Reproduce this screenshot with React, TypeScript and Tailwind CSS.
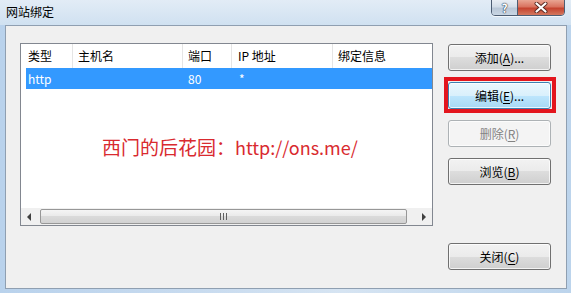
import type { ReactNode } from "react";

const ui = "font-['Noto_Sans_CJK_SC',sans-serif]";

type BtnProps = {
  children: ReactNode;
  variant?: "normal" | "hot" | "disabled";
};

function WinButton({ children, variant = "normal" }: BtnProps) {
  const look =
    variant === "hot"
      ? "border-[#3c7fb1] bg-[linear-gradient(#eaf6fd_0%,#d9f0fc_50%,#bee6fd_50%,#a7d9f5_100%)] text-black"
      : variant === "disabled"
        ? "border-[#adb2b5] bg-[#f4f4f4] text-[#838383]"
        : "border-[#707070] bg-[linear-gradient(#f2f2f2_0%,#ebebeb_50%,#dddddd_50%,#cfcfcf_100%)] text-black";
  return (
    <button
      type="button"
      className={`flex h-[27px] w-[103px] items-center justify-center rounded-[3px] border text-[12px] leading-none shadow-[inset_0_0_0_1px_rgba(255,255,255,0.75)] ${look}`}
    >
      {children}
    </button>
  );
}

function Key({ k }: { k: string }) {
  return <span className="underline underline-offset-2">{k}</span>;
}

function ArrowLeft() {
  return (
    <svg width="5" height="8" viewBox="0 0 5 8" aria-hidden>
      <polygon points="4,0 0,4 4,8" fill="#404040" />
    </svg>
  );
}

function ArrowRight() {
  return (
    <svg width="5" height="8" viewBox="0 0 5 8" aria-hidden>
      <polygon points="1,0 5,4 1,8" fill="#404040" />
    </svg>
  );
}

function CloseGlyph() {
  return (
    <svg width="14" height="11" viewBox="0 0 14 11" aria-hidden>
      <path d="M2.5 1.5 L11.5 9.5 M11.5 1.5 L2.5 9.5" stroke="#5a2a22" strokeWidth="4" strokeLinecap="round" />
      <path d="M2.5 1.5 L11.5 9.5 M11.5 1.5 L2.5 9.5" stroke="#ffffff" strokeWidth="2.2" strokeLinecap="round" />
    </svg>
  );
}

export default function App() {
  return (
    <div
      className={`relative flex h-[293px] w-[571px] flex-col overflow-hidden bg-[linear-gradient(90deg,#b9d2ec_0%,#c8dbef_35%,#d6e4f2_60%,#bcd4ec_100%)] ${ui}`}
    >
      {/* title bar */}
      <div className="flex h-[25px] shrink-0 items-start bg-[linear-gradient(#e2ecf6,#d0e1f1)]">
        <span className="pl-[6px] pt-[4px] text-[12px] leading-[16px] text-black">
          网站绑定
        </span>
        <div className="ml-auto mr-[6px] flex h-[17px] -mt-px overflow-hidden rounded-b-[4px] border border-[#4d5d73] shadow-[0_1px_0_rgba(255,255,255,0.7)]">
          <div className="flex w-[26px] items-center justify-center border-r border-[#4d5d73] bg-[linear-gradient(#e9eef4_0%,#d3dde8_45%,#b9c7d7_55%,#c9d6e4_100%)] text-[12px] font-bold leading-none text-white [text-shadow:0_0_1px_#2f3c4f,0_0_1px_#2f3c4f,0_0_1px_#2f3c4f]">
            ?
          </div>
          <div className="flex w-[46px] items-center justify-center bg-[linear-gradient(#e9a593_0%,#d9735f_45%,#c5432f_55%,#d3785f_100%)]">
            <CloseGlyph />
          </div>
        </div>
      </div>

      {/* client area */}
      <div className="ml-[5px] flex h-[264px] w-[562px] border border-[#8f9fb1] bg-[#f0f0f0] pl-[14px] pt-[17px]">
        {/* list view */}
        <div className="flex h-[183px] w-[413px] flex-col border border-[#828790] bg-white text-[12px] text-black">
          <div className="flex h-[24px] items-center">
            <div className="flex h-full w-[52px] items-center border-r border-[#e5e5e5] pl-[7px]">类型</div>
            <div className="flex h-full w-[110px] items-center border-r border-[#e5e5e5] pl-[5px]">主机名</div>
            <div className="flex h-full w-[49px] items-center border-r border-[#e5e5e5] pl-[5px]">端口</div>
            <div className="flex h-full w-[101px] items-center border-r border-[#e5e5e5] pl-[6px]">IP 地址</div>
            <div className="flex h-full flex-1 items-center pl-[5px]">绑定信息</div>
          </div>
          <div className="ml-[5px] flex h-[21px] items-center bg-[#3399ff] text-white">
            <div className="w-[47px] pl-[2px]">http</div>
            <div className="w-[109px]" />
            <div className="w-[50px] pl-[6px]">80</div>
            <div className="w-[101px] pl-[7px]">*</div>
          </div>
          <div className="flex-1" />
          {/* horizontal scrollbar */}
          <div className="flex h-[17px] items-stretch bg-[#f0f0f0]">
            <div className="flex w-[17px] items-center justify-center">
              <ArrowLeft />
            </div>
            <div className="flex flex-1 items-center py-px">
              <div className="ml-[2px] flex h-full w-[367px] items-center justify-center gap-[2px] rounded-[2px] border border-[#979797] bg-[linear-gradient(#f5f5f5_0%,#e9e9e9_50%,#dadada_50%,#d2d2d2_100%)]">
                <span className="h-[7px] w-px bg-[#606060]" />
                <span className="h-[7px] w-px bg-[#606060]" />
                <span className="h-[7px] w-px bg-[#606060]" />
              </div>
            </div>
            <div className="flex w-[17px] items-center justify-center">
              <ArrowRight />
            </div>
          </div>
        </div>

        {/* buttons */}
        <div className="ml-[15px] flex flex-col pt-px">
          <WinButton>
            添加(<Key k="A" />)...
          </WinButton>
          <div className="relative mt-[11px]">
            <WinButton variant="hot">
              编辑(<Key k="E" />)...
            </WinButton>
            <span className="pointer-events-none absolute -left-[4px] -right-[5px] -top-[5px] -bottom-[4px] border-[4px] border-[#e3151d]" />
          </div>
          <div className="mt-[11px]">
            <WinButton variant="disabled">
              删除(<Key k="R" />)
            </WinButton>
          </div>
          <div className="mt-[11px]">
            <WinButton>
              浏览(<Key k="B" />)
            </WinButton>
          </div>
          <div className="mt-[58px]">
            <WinButton>
              关闭(<Key k="C" />)
            </WinButton>
          </div>
        </div>
      </div>

      {/* watermark */}
      <span className="pointer-events-none absolute left-[102px] top-[136px] flex items-baseline text-[#d92a2f]">
        <span className="text-[19px] leading-[22px]">西门的后花园：</span>
        <span className="text-[18px] leading-[22px]">http://ons.me/</span>
      </span>
    </div>
  );
}
